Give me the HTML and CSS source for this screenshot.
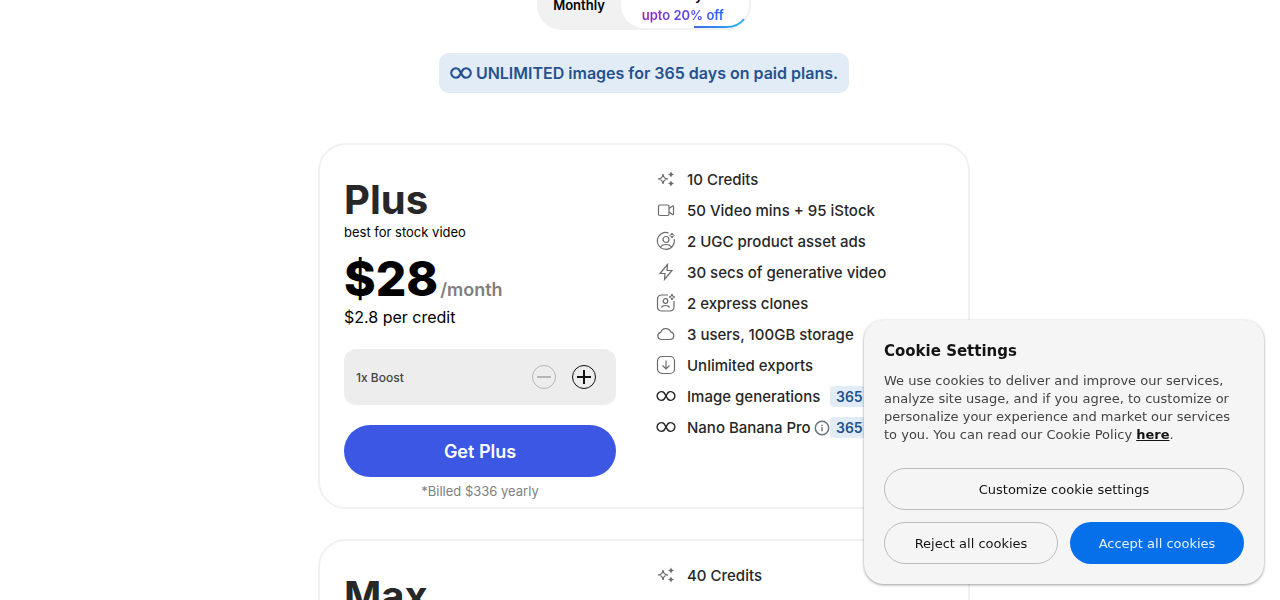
FILE: index.html
```html
<!DOCTYPE html>
<html lang="en">
<head>
    <meta charset="UTF-8">
    <meta name="viewport" content="width=device-width, initial-scale=1.0">
    <title>Pricing</title>
    <link rel="stylesheet" href="styles.css">
</head>
<body>

    <!-- Shared icons -->
    <svg class="sprite" aria-hidden="true">
        <symbol id="icon-sparkles" viewBox="0 0 20 20">
            <path d="M7 5C7.500 8.500 8.500 9.500 12 10C8.500 10.500 7.500 11.500 7 15C6.500 11.500 5.500 10.500 2 10C5.500 9.500 6.500 8.500 7 5Z"/>
            <path class="solid" d="M15 2.500L16 4.500L18 5.500L16 6.500L15 8.500L14 6.500L12 5.500L14 4.500ZM15 11.500L16 13.500L18 14.500L16 15.500L15 17.500L14 15.500L12 14.500L14 13.500Z"/>
        </symbol>
        <symbol id="icon-video" viewBox="0 0 20 20">
            <rect x="2.500" y="5" width="10.500" height="10.500" rx="1.500"/>
            <path d="M13 8.500L16.500 6Q17.500 5.500 17.500 6.500V14Q17.500 15 16.500 14.500L13 12"/>
        </symbol>
        <symbol id="icon-avatar" viewBox="0 0 20 20">
            <path d="M12.500 1.900A8.500 8.500 0 1 0 18.100 8M4.500 16.500C6 12.500 14 12.500 15.500 16.500"/>
            <circle cx="10" cy="8.500" r="3"/>
            <path d="M16 2Q16.300 4.200 18.500 4.500Q16.300 4.800 16 7Q15.700 4.800 13.500 4.500Q15.700 4.200 16 2Z"/>
        </symbol>
        <symbol id="icon-bolt" viewBox="0 0 20 20">
            <path d="M11.500 2.500L4 11.500H9L8.500 17.500L16 8.500H11Z"/>
        </symbol>
        <symbol id="icon-clone" viewBox="0 0 20 20">
            <path d="M12 2H6Q1.500 2 1.500 6.500V13.500Q1.500 18 6 18H13.500Q18 18 18 13.500V8M5.500 14.500C6.500 11.800 12.500 11.800 13.500 14.500"/>
            <circle cx="9.500" cy="8" r="2.300"/>
            <path d="M16 1Q16.400 3.600 19 4Q16.400 4.400 16 7Q15.600 4.400 13 4Q15.600 3.600 16 1Z"/>
        </symbol>
        <symbol id="icon-cloud" viewBox="0 0 20 20">
            <path d="M5 15.500A3.600 3.600 0 0 1 4.700 8.400A5.300 5.300 0 0 1 14.700 7.900A3.900 3.900 0 0 1 14.800 15.500Z"/>
        </symbol>
        <symbol id="icon-download" viewBox="0 0 20 20">
            <rect x="1.500" y="1.500" width="17" height="17" rx="4.500"/>
            <path d="M10 5.500V13.500M6.500 10.500L10 14L13.500 10.500"/>
        </symbol>
        <symbol id="icon-infinity" viewBox="0 0 20 20">
            <path d="M8.200 6.900A4.200 4.200 0 1 0 8.200 13.100L11.800 6.900A4.200 4.200 0 1 1 11.800 13.100Z"/>
        </symbol>
    </svg>

    <main class="pricing">
        <div class="billing-toggle">
            <button type="button" class="billing-option">Monthly</button>
            <button type="button" class="billing-option selected">
                <span>Yearly</span>
                <span class="discount">upto 20% off</span>
                <svg class="glow" viewBox="0 0 128 46" aria-hidden="true">
                    <defs>
                        <linearGradient id="glow-color" gradientUnits="userSpaceOnUse" x1="73" y1="0" x2="124" y2="0">
                            <stop offset="0" stop-color="#4169e8"/>
                            <stop offset="1" stop-color="#1fb6f7"/>
                        </linearGradient>
                    </defs>
                    <path d="M73 45H105Q117 45 123 37" fill="none" stroke="url(#glow-color)" stroke-width="2"/>
                </svg>
            </button>
        </div>

        <p class="banner">
            <svg class="banner-icon" viewBox="0 0 20 20" aria-hidden="true"><use href="#icon-infinity"/></svg>
            UNLIMITED images for 365 days on paid plans.
        </p>

        <!-- Plus plan -->
        <section class="plan">
            <div class="plan-info">
                <h2>Plus</h2>
                <p class="tagline">best for stock video</p>
                <p class="price">$28<span class="period">/month</span></p>
                <p class="per-credit">$2.8 per credit</p>
                <div class="boost">
                    <span>1x Boost</span>
                    <div class="boost-buttons">
                        <button type="button" class="step" aria-label="Less boost" disabled>
                            <svg viewBox="0 0 24 24"><circle cx="12" cy="12" r="11.500"/><path d="M5 12H19"/></svg>
                        </button>
                        <button type="button" class="step" aria-label="More boost">
                            <svg viewBox="0 0 24 24"><circle cx="12" cy="12" r="11.500"/><path d="M5 12H19M12 5V19"/></svg>
                        </button>
                    </div>
                </div>
                <button type="button" class="get-plan">Get Plus</button>
                <p class="billed">*Billed $336 yearly</p>
            </div>
            <ul class="features">
                <li><svg class="icon"><use href="#icon-sparkles"/></svg>10 Credits</li>
                <li><svg class="icon"><use href="#icon-video"/></svg>50 Video mins + 95 iStock</li>
                <li><svg class="icon"><use href="#icon-avatar"/></svg>2 UGC product asset ads</li>
                <li><svg class="icon"><use href="#icon-bolt"/></svg>30 secs of generative video</li>
                <li><svg class="icon"><use href="#icon-clone"/></svg>2 express clones</li>
                <li><svg class="icon"><use href="#icon-cloud"/></svg>3 users, 100GB storage</li>
                <li><svg class="icon"><use href="#icon-download"/></svg>Unlimited exports</li>
                <li>
                    <svg class="icon dark"><use href="#icon-infinity"/></svg>
                    <span class="feature-name">Image generations</span>
                    <span class="days">365</span>
                </li>
                <li>
                    <svg class="icon dark"><use href="#icon-infinity"/></svg>
                    <span class="feature-name">Nano Banana Pro
                        <svg class="info" viewBox="0 0 16 16"><circle cx="8" cy="8" r="6.700"/><path d="M8 7.300V11.300M8 4.700V6"/></svg>
                    </span>
                    <span class="days">365</span>
                </li>
            </ul>
        </section>

        <!-- Max plan -->
        <section class="plan">
            <div class="plan-info">
                <h2>Max</h2>
            </div>
            <ul class="features">
                <li><svg class="icon"><use href="#icon-sparkles"/></svg>40 Credits</li>
            </ul>
        </section>
    </main>

    <!-- Cookie notice -->
    <aside class="cookies">
        <h3>Cookie Settings</h3>
        <p>We use cookies to deliver and improve our services, analyze site usage, and if you agree, to customize or personalize your experience and market our services to you. You can read our Cookie Policy <a href="#">here</a>.</p>
        <div class="cookie-buttons">
            <button type="button" class="customize">Customize cookie settings</button>
            <button type="button">Reject all cookies</button>
            <button type="button" class="accept">Accept all cookies</button>
        </div>
    </aside>

</body>
</html>
```

FILE: styles.css
```css
* {
    box-sizing: border-box;
}

body {
    margin: 0;
    font-family: Inter, sans-serif;
    color: #000;
    background: #fff;
}

h2, h3, p, ul {
    margin: 0;
    padding: 0;
}

button {
    font: inherit;
    color: inherit;
    padding: 0;
    border: none;
    background: none;
    cursor: pointer;
}

.sprite {
    display: none;
}

.pricing {
    display: flex;
    flex-direction: column;
    align-items: center;
    margin-top: -20px;
    padding-left: 8px;
}

.billing-toggle {
    display: flex;
    padding: 2px;
    border-radius: 25px;
    background: #f1f1f1;
    font-size: 13px;
    font-weight: 600;
}

.billing-option {
    height: 46px;
    padding: 0 16px 0 14px;
}

.billing-option.selected {
    position: relative;
    display: flex;
    flex-direction: column;
    align-items: center;
    justify-content: center;
    gap: 2px;
    width: 128px;
    padding: 0 4px 0 0;
    border-radius: 23px;
    background: #fff;
    line-height: 18px;
}

.discount {
    background: linear-gradient(to right, #9b25c0, #2563ff);
    background-clip: text;
    -webkit-background-clip: text;
    color: transparent;
}

.glow {
    position: absolute;
    inset: 0;
}

.banner {
    display: flex;
    align-items: center;
    gap: 4px;
    height: 40px;
    margin: 23px 0 50px;
    padding: 0 11px;
    border-radius: 10px;
    background: #e2ecf7;
    color: #24528f;
    font-size: 16px;
    font-weight: 600;
}

.banner-icon {
    width: 22px;
    height: 22px;
    fill: none;
    stroke: currentColor;
    stroke-width: 2;
}

.plan {
    display: grid;
    grid-template-columns: 272px 1fr;
    gap: 40px;
    width: 100%;
    max-width: 652px;
    margin-bottom: 30px;
    padding: 24px 24px 8px;
    border: 2px solid #f1f1f1;
    border-radius: 28px;
    background: #fff;
}

.plan-info {
    padding-top: 7px;
}

h2 {
    font-size: 40px;
    line-height: 48px;
    font-weight: 700;
    color: #272727;
}

.tagline {
    font-size: 13px;
    line-height: 17px;
}

.price {
    display: flex;
    align-items: baseline;
    gap: 2px;
    margin-top: 9px;
    font-size: 48px;
    line-height: 58px;
    font-weight: 800;
}

.period {
    font-size: 18px;
    line-height: 20px;
    font-weight: 600;
    color: #808080;
}

.per-credit {
    font-size: 16px;
    line-height: 18px;
}

.boost {
    display: flex;
    align-items: center;
    justify-content: space-between;
    height: 56px;
    margin: 23px 0 20px;
    padding: 0 20px 0 12px;
    border-radius: 12px;
    background: #ededed;
    color: #444;
    font-size: 12px;
    font-weight: 500;
}

.boost-buttons {
    display: flex;
    gap: 16px;
}

.step {
    width: 24px;
    height: 24px;
    color: #111;
}

.step:disabled {
    color: #b5b5b5;
    cursor: default;
}

.step svg {
    display: block;
    fill: none;
    stroke: currentColor;
}

.step path {
    stroke-width: 2;
}

.get-plan {
    width: 100%;
    height: 52px;
    border-radius: 26px;
    background: #3c57e3;
    color: #fff;
    font-size: 18px;
    font-weight: 600;
}

.billed {
    margin-top: 6px;
    font-size: 13px;
    line-height: 16px;
    color: #808080;
    text-align: center;
}

.features {
    display: flex;
    flex-direction: column;
    gap: 10px;
    list-style: none;
    color: #272727;
    font-size: 15px;
    line-height: 21px;
    font-weight: 500;
}

.features li {
    display: flex;
    align-items: flex-start;
    height: 21px;
    white-space: nowrap;
}

.icon {
    width: 20px;
    height: 20px;
    margin-right: 11px;
    fill: none;
    stroke: #6c6c6c;
    stroke-width: 1.2;
}

.icon.dark {
    stroke: #222;
    stroke-width: 1.5;
}

.solid {
    fill: #6c6c6c;
    stroke: none;
}

.feature-name {
    display: flex;
    align-items: center;
    gap: 3px;
    min-width: 143px;
}

.info {
    width: 16px;
    height: 16px;
    fill: none;
    stroke: #6b7280;
    stroke-width: 1.5;
}

.days {
    padding: 0 6px;
    border-radius: 4px;
    background: #e2ecf7;
    color: #24528f;
    font-size: 14px;
    font-weight: 600;
}

.cookies {
    position: fixed;
    right: 16px;
    bottom: 16px;
    width: 400px;
    padding: 20px;
    border-radius: 20px;
    background: #f5f5f5;
    box-shadow: 0 1px 3px rgba(0, 0, 0, 0.4);
    color: #141414;
    font-family: "DejaVu Sans", sans-serif;
    font-size: 13px;
}

.cookies h3 {
    margin-bottom: 10px;
    font-size: 15px;
    line-height: 22px;
}

.cookies p {
    margin-bottom: 24px;
    line-height: 18px;
    color: #444;
}

.cookies a {
    color: #141414;
    font-weight: 700;
}

.cookie-buttons {
    display: grid;
    grid-template-columns: 1fr 1fr;
    gap: 12px;
}

.cookie-buttons button {
    height: 42px;
    border: 1px solid #bdbdbd;
    border-radius: 21px;
}

.cookie-buttons .customize {
    grid-column: 1 / -1;
}

.cookie-buttons .accept {
    border: none;
    background: #066fea;
    color: #e6f1ff;
}
```
